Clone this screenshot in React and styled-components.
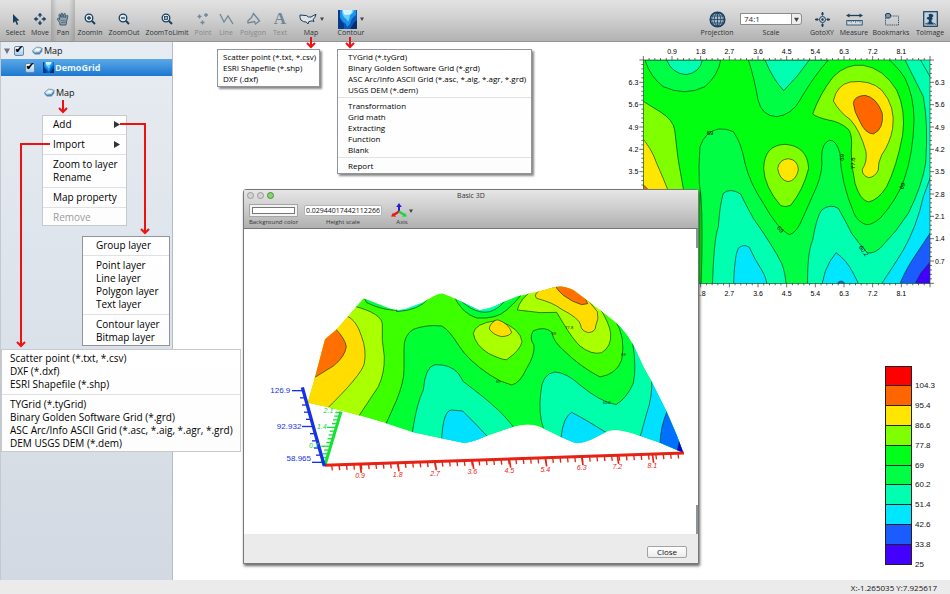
import React, { useState } from 'react';
import styled, { createGlobalStyle, css } from 'styled-components';

const GlobalStyle = createGlobalStyle`
  *, *::before, *::after {
    box-sizing: border-box;
  }
  body {
    margin: 0;
    background: #fff;
    color: #111;
    font-family: 'Open Sans', 'Noto Sans', sans-serif;
    font-size: 10px;
  }
  button, input, select {
    font-family: inherit;
    color: inherit;
  }
`;

const Page = styled.div`
  position: relative;
  display: flex;
  flex-direction: column;
  min-height: 100vh;
  overflow: hidden;
`;

const Toolbar = styled.header`
  display: flex;
  align-items: stretch;
  height: 42px;
  padding: 0 3px 0 2px;
  background: linear-gradient(#e2e2e2, #d0d0d0 45%, #b2b2b2);
  border-bottom: 1px solid #979797;
`;

const ToolGroup = styled.div`
  display: flex;
  margin-left: ${(p) => (p.$end ? 'auto' : '0')};
`;

const toolBox = css`
  display: flex;
  flex-direction: column;
  align-items: center;
  justify-content: flex-end;
  width: ${(p) => p.$w}px;
  padding: 0 0 3px;
  font-size: 7px;
  line-height: 10px;
  white-space: nowrap;
`;

const ToolButton = styled.button`
  ${toolBox}
  border: 0;
  background: ${(p) =>
    p.$pressed ? 'linear-gradient(90deg, #8f8f8f66, #ffffff22 25%, #ffffff22 75%, #8f8f8f66), linear-gradient(#d8d8d8, #a6a6a6)' : 'transparent'};
  color: #2c3236;

  &:disabled {
    color: #85898c;
  }
`;

const ToolField = styled.div`
  ${toolBox}
  color: #2c3236;
`;

const ToolIcon = styled.span`
  display: flex;
  align-items: center;
  justify-content: center;
  gap: 3px;
  height: 18px;
  color: ${(p) => (p.$off ? '#6f8797' : '#173f5f')};
`;

const ScaleBox = styled.div`
  display: flex;
  align-items: center;
  position: relative;
  width: 62px;
  height: 18px;
`;

const ScaleSelect = styled.select`
  appearance: none;
  width: 100%;
  height: 12px;
  padding: 0 0 0 3px;
  border: 1px solid #8c8c8c;
  border-radius: 0 3px 3px 0;
  background: linear-gradient(90deg, #fff 50px, #8c8c8c 50px, #8c8c8c 51px, #eee 51px);
  font-size: 8px;
  line-height: 10px;
`;

const ScaleArrow = styled.span`
  position: absolute;
  right: 3px;
  display: flex;
  pointer-events: none;
`;

const Body = styled.div`
  display: flex;
  flex: 1;
`;

const Sidebar = styled.aside`
  flex: 0 0 173px;
  border-left: 1px solid #c4c9cf;
  border-right: 1px solid #b5bcc4;
  background: linear-gradient(#e7ecf2, #d2d9e2);
  font-size: 9px;
`;

const TreeRow = styled.div`
  display: flex;
  align-items: center;
  gap: ${(p) => (p.$selected ? '8px' : '4px')};
  height: 17px;
  padding-left: ${(p) => (p.$selected ? '24px' : '3px')};
  color: ${(p) => (p.$selected ? '#e8f6ff' : '#111')};
  font-weight: ${(p) => (p.$selected ? 700 : 400)};
  ${(p) => p.$selected && 'background: linear-gradient(#5ba8e8, #1c78cf);'}
`;

const Check = styled.input`
  appearance: none;
  display: flex;
  align-items: center;
  justify-content: center;
  width: 10px;
  height: 10px;
  margin: 0;
  border: 1px solid #6487ab;
  border-radius: 2px;
  background: linear-gradient(#eef6ff, #a9ccee);

  &:checked::after {
    content: '✔';
    margin-bottom: 3px;
    color: #000;
    font: 11px 'DejaVu Sans', sans-serif;
  }
`;

const RowLabel = styled.label`
  display: flex;
  align-items: center;
  gap: 1px;
  padding-left: ${(p) => (p.$indent ? 4 : 0)}px;
`;

const MapCaption = styled.div`
  display: flex;
  align-items: center;
  gap: 1px;
  height: 17px;
  margin-top: 8px;
  padding-left: 43px;
`;

const Canvas = styled.main`
  display: flex;
  flex: 1;
  flex-direction: column;
  align-items: flex-end;
  background: #fff;
`;

const PlotSvg = styled.svg`
  width: 330px;
  height: 263px;
  font-family: 'Liberation Sans', sans-serif;
  font-size: 21px;
`;

const Legend = styled.ul`
  display: flex;
  flex-direction: column;
  width: 65px;
  height: 199px;
  margin: 61px 0 15px;
  padding: 0;
  list-style: none;
  font: 8px/10px 'Liberation Sans', sans-serif;
`;

const LegendRow = styled.li`
  display: flex;
  flex: 1;
  align-items: flex-end;
  gap: 3px;

  &::before {
    content: '';
    align-self: stretch;
    width: 27px;
    border: solid #222;
    border-width: 0 1px 1px;
    background: ${(p) => p.$color};
  }
  &:first-child::before {
    border-top-width: 1px;
  }
  span {
    margin-bottom: -5px;
  }
`;

const StatusBar = styled.footer`
  display: flex;
  justify-content: flex-end;
  height: 14px;
  padding-right: 13px;
  background: #ebebeb;
  font-size: 8px;
  line-height: 15px;
`;

const Menu = styled.div`
  position: absolute;
  left: ${(p) => p.$x}px;
  top: ${(p) => p.$y}px;
  width: ${(p) => p.$w}px;
  border: 1px solid ${(p) => (p.$dark ? '#8f959b' : '#c6cacd')};
  background: linear-gradient(#fff, #fdfdfd);
  font-size: ${(p) => (p.$small ? 8 : 10)}px;
  line-height: ${(p) => (p.$small ? 11 : 13)}px;
  box-shadow: ${(p) => (p.$small ? '2px 2px 2px #0007' : 'none')};
`;

const MenuSection = styled.div`
  padding: ${(p) => (p.$small ? 2 : 3)}px 0;

  &:first-child {
    padding-top: ${(p) => (p.$small ? 1 : 2)}px;
  }
  &:last-child {
    padding-bottom: ${(p) => (p.$small ? 2 : 1)}px;
  }
  & + & {
    border-top: 1px solid #dfe1e3;
  }
`;

const MenuItem = styled.button`
  display: flex;
  align-items: center;
  justify-content: space-between;
  width: 100%;
  padding: 0 6px 0 ${(p) => p.$pad}px;
  border: 0;
  background: none;
  color: #000;
  font-size: inherit;
  line-height: inherit;
  text-align: left;
  white-space: nowrap;

  &:disabled {
    color: #9b9b9b;
  }
`;

const Arrows = styled.svg`
  position: absolute;
  left: 0;
  top: 0;
  pointer-events: none;
`;

const Dialog = styled.section`
  position: absolute;
  left: 243px;
  top: 189px;
  width: 456px;
  border: 1px solid #777;
  border-radius: 3px 3px 0 0;
  background: #ebebeb;
  box-shadow: 1px 2px 3px #0009;
`;

const DialogHead = styled.div`
  display: flex;
  flex-direction: column;
  height: 39px;
  border-bottom: 1px solid #777;
  background: linear-gradient(#e6e6e6, #cfcfcf 45%, #b0b0b0);
  color: #333;
`;

const TitleRow = styled.div`
  display: grid;
  grid-template-columns: 1fr auto 1fr;
  align-items: center;
  height: 11px;
  padding: 0 3px;
  font-size: 7px;
  line-height: 10px;
`;

const Lights = styled.div`
  display: flex;
  gap: 3px;
`;

const Light = styled.button`
  width: 7px;
  height: 7px;
  padding: 0;
  border: 1px solid ${(p) => (p.$on ? '#4f8a43' : '#999')};
  border-radius: 50%;
  background: ${(p) => (p.$on ? '#83d86c' : '#d4d4d4')};
`;

const DialogTools = styled.div`
  display: flex;
  gap: 6px;
  padding: 2px 5px 0;
  font-size: 6px;
  line-height: 8px;
`;

const DialogTool = styled.div`
  display: flex;
  flex-direction: column;
  align-items: center;
  width: ${(p) => p.$w}px;
  white-space: nowrap;
`;

const ControlSlot = styled.div`
  display: flex;
  align-items: center;
  justify-content: center;
  gap: 2px;
  width: 100%;
  height: 15px;
`;

const Swatch = styled.input`
  width: 100%;
  height: 13px;
  padding: 2px;
  border: 1px solid #a5a5a5;
  background: #f3f3f3;

  &::-webkit-color-swatch-wrapper {
    padding: 0;
  }
  &::-webkit-color-swatch {
    border: 1px solid #777;
    border-radius: 0;
  }
`;

const HeightInput = styled.input`
  width: 100%;
  height: 11px;
  padding: 0 1px;
  border: 1px solid #b5b5b5;
  border-radius: 2px;
  background: #fff;
  color: #111;
  font-size: 7px;
`;

const PlainButton = styled.button`
  display: flex;
  align-items: center;
  gap: 2px;
  padding: 0;
  border: 0;
  background: none;
`;

const SurfaceSvg = styled.svg`
  display: block;
  width: 100%;
  height: 305px;
  background:
    linear-gradient(#8d939a, #8d939a) right top / 2px 19px no-repeat,
    linear-gradient(#8d939a, #8d939a) right bottom / 2px 29px no-repeat,
    #fff;
  font-family: 'Liberation Sans', sans-serif;
  font-size: 21px;
`;

const DialogFoot = styled.div`
  display: flex;
  align-items: center;
  justify-content: flex-end;
  height: 29px;
  padding: 6px 11px 0 0;
`;

const CloseButton = styled.button`
  width: 40px;
  height: 12px;
  padding: 0;
  border: 1px solid #a3a3a3;
  border-radius: 2px;
  background: linear-gradient(#fff, #ececec);
  font-size: 8px;
  line-height: 10px;
`;

/* ---------- icons ---------- */

const Icon = ({ w = 14, h = 14, children }) => (
  <svg width={w} height={h} viewBox={`0 0 ${w} ${h}`} fill="none" stroke="currentColor" strokeWidth="1.3">
    {children}
  </svg>
);

const DownTri = ({ size = 4 }) => (
  <svg width={size} height={size} viewBox="0 0 4 4">
    <path d="M0 0.5H4L2 4Z" fill="#444" />
  </svg>
);

const SelectIcon = () => (
  <Icon w={8} h={13}>
    <path d="M1 1V10L3.2 8.2L4.8 12L6.2 11.3L4.7 7.8L7.4 7.4Z" fill="currentColor" stroke="none" />
  </Icon>
);

const MoveIcon = () => (
  <Icon>
    <path d="M7 3V5.2M7 8.8V11M3 7H5.2M8.8 7H11" />
    <path d="M7 .8L9.4 3.6H4.6ZM7 13.2L9.4 10.4H4.6ZM.8 7L3.6 4.6V9.4ZM13.2 7L10.4 4.6V9.4Z" fill="currentColor" stroke="none" />
  </Icon>
);

const PanIcon = () => (
  <Icon>
    <path
      d="M4 13L3.6 10.5L1.3 7.3C1 6.4 2.2 6 2.8 6.8L3.7 7.7L2.9 3C3 2 4.2 2 4.4 3L5 5.6L5.1 1.7C5.3.8 6.6.8 6.7 1.7L7 5.4L8 1.9C8.4 1.1 9.5 1.4 9.4 2.3L9 5.8L10.6 3.6C11.3 3 12.2 3.6 11.8 4.5L10.8 8.5L10 13Z"
      fill="#8fa3ae"
      stroke="#35536a"
      strokeWidth=".9"
    />
    <path d="M4.6 8.5L9.6 8.8M5 10.5H9.4" stroke="#35536a" strokeWidth=".6" />
  </Icon>
);

const ZoomIcon = ({ kind }) => (
  <Icon w={12} h={12}>
    <circle cx="5" cy="5" r="3.8" fill="#e5e8ea" />
    <path d="M8 8L11 11" strokeWidth="2" />
    {kind === 'in' && <path d="M5 3V7M3 5H7" />}
    {kind === 'out' && <path d="M3 5H7" />}
    {kind === 'limit' && <rect x="3.5" y="3.5" width="3" height="3" strokeWidth=".8" fill="#a5b5c1" />}
  </Icon>
);

const PointIcon = () => (
  <Icon>
    <path d="M3.5 2.5V6.5M1.5 4.5H5.5M10 1V5M8 3H12M6.5 8.5V12.5M4.5 10.5H8.5" />
  </Icon>
);

const LineIcon = () => (
  <Icon w={15}>
    <path d="M1 2L5 10L9 4L14 12" />
  </Icon>
);

const PolygonIcon = () => (
  <Icon w={15}>
    <path d="M7.5 1.5L13.5 9L9.5 12L8.5 9.5L2 11L1.8 9L5.5 5.5Z" />
  </Icon>
);

const LetterIcon = styled.span`
  font: 700 17px/18px 'Liberation Serif', serif;
`;

const UsaIcon = () => (
  <Icon w={18} h={13}>
    <path
      d="M1 2L7.5 2.6L9.5 4L12 4L14 2.8L17 1.2L16 4.2L14.3 6.2L14.8 8.8L13.2 7.8L9.8 8.6L9 11L7.2 9L4.5 8.6L1.8 7L1 4.5Z"
      fill="#dfe3e6"
      strokeWidth="1"
    />
  </Icon>
);

const ContourIcon = ({ size = 19 }) => (
  <svg width={size} height={size} viewBox="0 0 19 19">
    <rect width="19" height="19" fill="#0b57b8" />
    <path d="M0 0H2V8Q3 12 6 14V19H0Z" fill="#083a86" />
    <path d="M19 10Q16 12 14 16L12 19H19Z" fill="#062c6c" />
    <path d="M2 0V7Q4 12 8 14L9 17L12 14Q13 8 18 5V0Z" fill="#1b94ec" />
    <path d="M4 0Q4 6 7 8Q9 9 10 12Q12 8 12 5Q15 4 16 0Z" fill="#6fd0fb" />
    <path d="M5 0Q5 5 8 5Q10 4 11 5Q14 4 14 0Z" fill="#d2f6ff" />
  </svg>
);

const GlobeIcon = () => (
  <Icon w={17} h={17}>
    <circle cx="8.5" cy="8.5" r="7.4" fill="#a9bac5" />
    <path
      d="M1 8.5H16M2 5H15M2 12H15M4 2.7H13M4 14.3H13M8.5 1V16M8.5 1Q1.5 8.5 8.5 16M8.5 1Q15.5 8.5 8.5 16M6 1.5Q-1 8.5 6 15.5M11 1.5Q18 8.5 11 15.5"
      strokeWidth=".8"
    />
  </Icon>
);

const GotoIcon = () => (
  <Icon w={17} h={17}>
    <circle cx="8.5" cy="8.5" r="3" strokeWidth="1" />
    <circle cx="8.5" cy="8.5" r="1.2" fill="currentColor" stroke="none" />
    <path d="M8.5 1V3M8.5 14V16M1 8.5H3M14 8.5H16" />
    <path d="M8.5 5L6.8 2.6H10.2ZM8.5 12L6.8 14.4H10.2ZM5 8.5L2.6 6.8V10.2ZM12 8.5L14.4 6.8V10.2Z" fill="currentColor" stroke="none" />
  </Icon>
);

const MeasureIcon = () => (
  <Icon w={17} h={13}>
    <path d="M2 2.5H15" />
    <path d="M0 2.5L3.5.5V4.5ZM17 2.5L13.5.5V4.5Z" fill="currentColor" stroke="none" />
    <rect x=".8" y="7.5" width="15.4" height="4.5" fill="#d3dce2" strokeWidth=".8" />
    <path d="M3 7.5V9M5.2 7.5V9.8M7.4 7.5V9M9.6 7.5V9.8M11.8 7.5V9M14 7.5V9.8" strokeWidth=".6" />
  </Icon>
);

const BookmarkIcon = () => (
  <Icon w={17} h={14}>
    <path d="M8 4H15.5V13H2.5V6" strokeWidth=".8" strokeDasharray="1.4 .8" />
    <rect x="2.5" y="1.5" width="5" height="4.5" rx="1.5" fill="#8196a5" strokeWidth="1" />
  </Icon>
);

const ImageIcon = () => (
  <Icon w={15} h={16}>
    <rect x=".7" y=".7" width="13.6" height="14.6" fill="#c3d0d9" strokeWidth="1.2" />
    <path d="M5.5 3.5Q7.5 2 9.5 3.2L10.5 5L9 6.5L9.8 8L8.5 9L8.8 11.5L11.5 13.5H3L5.5 12L6 9.5L5 8L3.5 8.2L4.5 6L6.2 5.8Z" fill="currentColor" stroke="none" />
    <path d="M2 13Q8 10 13 13.5" strokeWidth=".8" />
  </Icon>
);

const MapGlyph = () => (
  <svg width="11" height="10" viewBox="0 0 11 10">
    <path d="M.5 4.5L4.5 1.2Q8 .8 10.3 2.5L7.5 6.5L2.5 7Z" fill="#c6dbe8" stroke="#58809b" strokeWidth=".7" />
    <path d="M.5 4.5L2.5 7L7.5 6.5L10.3 2.5V5.3L7.5 8.6H3L.7 6.5Z" fill="#4a86b4" />
    <path d="M2 4.3L5 2.2L8.5 3L6.5 5Z" fill="#f4fafc" />
  </svg>
);

const AxisIcon = () => (
  <svg width="16" height="15" viewBox="0 0 16 15">
    <path d="M8 9V3" stroke="#2b19d8" strokeWidth="2" />
    <path d="M8 0L10.8 4H5.2Z" fill="#2b19d8" />
    <path d="M8 8.5L3 11.7" stroke="#f01515" strokeWidth="2.4" />
    <path d="M0 13.5L2 9.8L5 13.8Z" fill="#f01515" />
    <path d="M8 8.5L13 11.7" stroke="#1ad83a" strokeWidth="2.4" />
    <path d="M16 13.5L14 9.8L11 13.8Z" fill="#1ad83a" />
  </svg>
);

/* ---------- data ---------- */

const leftTools = [
  { label: 'Select', w: 27, icon: <SelectIcon /> },
  { label: 'Move', w: 22, icon: <MoveIcon /> },
  { label: 'Pan', w: 24, icon: <PanIcon />, pressed: true },
  { label: 'ZoomIn', w: 30, icon: <ZoomIcon kind="in" /> },
  { label: 'ZoomOut', w: 38, icon: <ZoomIcon kind="out" /> },
  { label: 'ZoomToLimit', w: 48, icon: <ZoomIcon kind="limit" /> },
  { label: 'Point', w: 24, icon: <PointIcon />, off: true },
  { label: 'Line', w: 22, icon: <LineIcon />, off: true },
  { label: 'Polygon', w: 32, icon: <PolygonIcon />, off: true },
  { label: 'Text', w: 22, icon: <LetterIcon>A</LetterIcon>, off: true },
  { label: 'Map', w: 40, icon: <UsaIcon />, drop: true },
  { label: 'Contour', w: 40, icon: <ContourIcon />, drop: true },
];

const rightTools = [
  { label: 'GotoXY', w: 34, icon: <GotoIcon /> },
  { label: 'Measure', w: 30, icon: <MeasureIcon /> },
  { label: 'Bookmarks', w: 44, icon: <BookmarkIcon /> },
  { label: 'ToImage', w: 34, icon: <ImageIcon /> },
];

const menus = [
  {
    name: 'Map import', x: 217, y: 49, w: 103, pad: 5, small: true, dark: true,
    sections: [['Scatter point (*.txt, *.csv)', 'ESRI Shapefile (*.shp)', 'DXF (.dxf)']],
  },
  {
    name: 'Contour', x: 337, y: 49, w: 195, pad: 10, small: true, dark: true,
    sections: [
      ['TYGrid (*.tyGrd)', 'Binary Golden Software Grid (*.grd)', 'ASC Arc/Info ASCII Grid (*.asc, *.aig, *.agr, *.grd)', 'USGS DEM (*.dem)'],
      ['Transformation', 'Grid math', 'Extracting', 'Function', 'Blank'],
      ['Report'],
    ],
  },
  {
    name: 'Map layer', x: 42, y: 115, w: 85, pad: 10,
    sections: [['Add'], ['Import'], ['Zoom to layer', 'Rename'], ['Map property'], ['Remove']],
  },
  {
    name: 'Add', x: 82, y: 236, w: 88, pad: 13, dark: true,
    sections: [['Group layer'], ['Point layer', 'Line layer', 'Polygon layer', 'Text layer'], ['Contour layer', 'Bitmap layer']],
  },
  {
    name: 'Import', x: 1, y: 349, w: 240, pad: 8,
    sections: [
      ['Scatter point (*.txt, *.csv)', 'DXF (*.dxf)', 'ESRI Shapefile (*.shp)'],
      ['TYGrid (*.tyGrid)', 'Binary Golden Software Grid (*.grd)', 'ASC Arc/Info ASCII Grid (*.asc, *.aig, *.agr, *.grd)', 'DEM USGS DEM (*.dem)'],
    ],
  },
];

const legend = [
  ['#ff0000', '104.3'],
  ['#ff6600', '95.4'],
  ['#ffe600', '86.6'],
  ['#80ff00', '77.8'],
  ['#00ff1a', '69'],
  ['#00ff44', '60.2'],
  ['#00ffb0', '51.4'],
  ['#00e6ff', '42.6'],
  ['#1a5cff', '33.8'],
  ['#4400ff', '25'],
];

const plotAreas = [
  ['#00ff44', 'M45 60Q60 110 100 140Q165 170 225 140Q265 105 272 60Z'],
  ['#00ffb0', 'M110 60Q125 100 168 104Q210 98 217 60Z'],
  ['#00ff44', 'M355 60Q372 110 384 180Q395 228 440 230Q485 225 510 180Q550 110 595 60Z'],
  ['#00ffb0', 'M405 60Q430 120 461 152Q500 115 538 60Z'],
  ['#80ff00', 'M30 178L90 215Q130 240 134 270Q142 360 160 446V760H30Z'],
  ['#ffe600', 'M30 286Q65 325 80 370Q100 415 112 446V760H30Z'],
  ['#ff6600', 'M30 425L52 446V760H30Z'],
  ['#00ff44', 'M765 50Q800 75 825 115Q852 170 852 240Q850 340 822 420Q800 480 750 535Q725 555 710 554Q685 548 672 520Q632 425 630 340Q618 298 598 301Q575 310 575 350Q580 390 560 440L520 530Q500 580 478 584Q445 570 400 490Q360 430 345 370Q335 310 310 275Q290 265 265 267Q225 275 210 320Q205 380 208 430Q222 520 212 760H920V50Z'],
  ['#00ffb0', 'M247 760Q250 600 265 560Q270 490 280 460Q300 442 332 462Q345 490 370 535Q430 620 455 670Q468 700 470 760Z'],
  ['#00e6ff', 'M310 760Q312 650 325 625Q340 610 358 622Q375 660 395 690Q412 715 414 760Z'],
  ['#00ffb0', 'M533 760Q530 640 548 600Q560 530 575 510Q600 490 625 505Q645 540 665 580Q690 615 712 638Q730 642 750 625Q800 575 835 520Q875 440 887 370Q895 250 880 170Q850 110 820 50H920V760Z'],
  ['#00ffb8', 'M866 50L920 145V50Z'],
  ['#00e6ff', 'M575 760Q575 690 618 638Q650 660 670 700L700 760Z'],
  ['#1a5cff', 'M620 732Q635 714 645 732Z'],
  ['#00e6ff', 'M735 760Q790 680 820 630Q860 560 880 470L920 360V760Z'],
  ['#1a5cff', 'M798 760Q820 700 850 655L920 550V760Z'],
  ['#4400ff', 'M840 760L872 700L920 643V760Z'],
  ['#80ff00', 'M548 222Q570 160 610 110Q650 70 700 76Q760 85 800 150Q828 210 818 285Q800 380 770 440Q745 480 715 486Q690 480 675 430Q660 350 665 310Q665 280 655 268Q630 245 595 240Q560 232 548 222Z'],
  ['#ffe600', 'M610 183Q620 135 660 126Q720 118 755 150Q798 200 788 265Q780 310 755 345Q743 370 745 390Q735 412 715 413Q695 405 697 388Q712 365 708 335Q690 270 660 238Q630 218 610 183Z'],
  ['#ff6600', 'M670 190Q672 168 705 166Q740 172 757 220Q762 268 730 282Q705 280 690 245Q672 215 670 190Z'],
  ['#80ff00', 'M401 385Q403 315 465 313Q532 318 536 385Q520 450 482 496Q466 503 452 497Q403 440 401 385Z'],
  ['#ffe600', 'M443 385Q448 358 475 356Q505 360 505 390Q498 422 474 425Q448 420 443 385Z'],
];

const surfaceOutline =
  'M173 398L195 322L225 208L258 180L295 138L340 85L400 108Q445 130 480 112L520 97Q560 70 577 70Q600 78 630 93L685 119Q705 124 760 97L805 78L860 66L915 51Q940 45 970 60L1010 90L1070 135Q1120 170 1150 225L1180 290L1205 335L1250 425L1280 495L1300 548L1230 518L1170 497Q1110 475 1075 482L1025 508Q990 524 970 517L935 502L880 475Q845 455 790 470L710 497Q660 520 640 518L575 505L490 487L408 460L325 436L235 412Z';

const surfaceAreas = [
  ['#00ff44', 'M345 88L350 98Q400 122 445 121L445 60H345Z'],
  ['#00ffb0', 'M440 125Q510 120 535 85L480 80L350 80Q400 105 440 116Z'],
  ['#00ff33', 'M610 75Q635 130 680 144Q740 148 770 120Q800 95 825 60Z'],
  ['#00ffaa', 'M630 90Q695 150 745 112L785 75Z'],
  ['#aaff00', 'M310 108Q398 130 397 165Q394 210 403 260Q404 310 385 350L315 455H100V108Z'],
  ['#ffdd00', 'M288 136Q320 150 335 200Q350 240 343 280Q335 315 225 422H100V136Z'],
  ['#ff7000', 'M256 176Q285 205 289 230Q285 260 250 288L190 325H100V176Z'],
  ['#00ff33', 'M402 475L440 390Q462 335 462 300V240Q460 195 490 178Q530 163 575 168Q598 180 625 225Q655 272 720 315Q750 336 785 345Q810 340 830 295Q855 255 852 225Q836 205 850 182Q885 168 905 186Q910 215 940 240Q990 290 1050 321Q1100 312 1115 270Q1128 200 1095 150L1060 120H1400V600H402Z'],
  ['#00ffaa', 'M487 600V487Q500 400 520 360Q525 290 555 284Q600 282 625 310L640 335Q700 380 720 398Q770 440 800 485V600Z'],
  ['#00e1ff', 'M575 600V505Q580 420 605 420L638 423L680 465L722 510V600Z'],
  ['#00ffaa', 'M880 600V475Q865 430 872 370Q875 310 915 306Q950 308 990 345Q1050 395 1098 404Q1130 385 1150 340Q1160 290 1148 220H1400V600Z'],
  ['#00e1ff', 'M933 600V502Q940 440 965 427Q1010 450 1080 495V600Z'],
  ['#00e1ff', 'M1205 325Q1208 380 1190 430L1165 520V600H1400V325Z'],
  ['#0070ff', 'M1255 415Q1230 470 1230 525V600H1400V415Z'],
  ['#1000d8', 'M1290 505L1278 560V600H1400V505Z'],
  ['#aaff00', 'M850 60Q810 85 802 120Q840 124 870 128L920 127L940 160Q970 210 990 228Q1025 256 1055 248Q1085 230 1082 190Q1078 160 1050 115L1000 40Z'],
  ['#ffdd00', 'M885 50Q845 72 860 85Q910 98 935 118Q988 145 992 165Q992 182 1015 188Q1038 185 1037 168Q1048 145 1042 125L990 60L930 30Z'],
  ['#ff7000', 'M912 40Q920 60 940 76Q970 98 995 104L1013 101Q1005 75 970 45Z'],
  ['#aaff00', 'M738 152Q675 160 670 190Q675 225 715 250Q755 270 770 269Q812 240 816 215Q812 175 745 152Z'],
  ['#ffdd00', 'M738 150Q718 162 718 177Q730 195 755 200Q780 198 785 187Q775 160 745 150Z'],
];

const range = (n) => Array.from({ length: n }, (_, i) => i);

const ContourPlot = () => (
  <PlotSvg viewBox="-30 6 990 789" role="img" aria-label="Contour map">
    <defs>
      <clipPath id="plotClip">
        <rect x="40" y="60" width="860" height="670" />
      </clipPath>
    </defs>
    <rect x="40" y="60" width="860" height="670" fill="#00ff11" />
    <g clipPath="url(#plotClip)" stroke="#0a3a14" strokeWidth="2">
      {plotAreas.map(([fill, d]) => (
        <path key={d} d={d} fill={fill} />
      ))}
    </g>
    <rect x="40" y="60" width="860" height="670" fill="none" stroke="#1c5524" strokeWidth="2" />
    <g stroke="#222" strokeWidth="2">
      {range(51).map((i) => {
        const x = 40 + i * 17.2;
        const len = i % 5 === 0 ? 12 : 6;
        return <path key={i} d={`M${x} 60V${60 - len}M${x} 730V${730 + len}`} />;
      })}
      {range(51).map((i) => {
        const y = 730 - i * 13.4;
        const len = i % 5 === 0 ? 12 : 6;
        return <path key={i} d={`M40 ${y}H${40 - len}M900 ${y}H${900 + len}`} />;
      })}
    </g>
    {range(9).map((i) => (
      <g key={i} textAnchor="middle">
        <text x={126 + i * 86} y="43">{((i + 1) * 0.9).toFixed(1)}</text>
        <text x={126 + i * 86} y="768">{((i + 1) * 0.9).toFixed(1)}</text>
      </g>
    ))}
    {range(9).map((i) => (
      <g key={i}>
        <text x="25" y={671 - i * 67} textAnchor="end">{((i + 1) * 0.7).toFixed(1)}</text>
        <text x="915" y={671 - i * 67}>{((i + 1) * 0.7).toFixed(1)}</text>
      </g>
    ))}
    <g fontSize="18" textAnchor="middle">
      <text x="240" y="286">69</text>
      <text transform="translate(642 352) rotate(-90)">69</text>
      <text transform="translate(676 370) rotate(-90)">77.8</text>
      <text transform="translate(823 440) rotate(-65)">69</text>
      <text transform="translate(446 572) rotate(50)">69</text>
      <text transform="translate(696 636) rotate(55)">60.2</text>
    </g>
  </PlotSvg>
);

const redTicks = [330, 443, 555, 667, 778, 886, 995, 1102, 1207];

const Surface = () => (
  <SurfaceSvg viewBox="-18 -123 1362 915" role="img" aria-label="Basic 3D surface">
    <defs>
      <clipPath id="surfaceClip">
        <path d={surfaceOutline} />
      </clipPath>
    </defs>
    <path d="M225 585L273 425" stroke="#10e430" strokeWidth="9" />
    {range(14).map((i) => (
      <path
        key={i}
        d={`M${228 + i * 3.4} ${574 - i * 11.3}h${i % 5 === 4 ? -28 : -16}`}
        stroke="#10e430"
        strokeWidth="4"
      />
    ))}
    <g clipPath="url(#surfaceClip)">
      <path d={surfaceOutline} fill="#3cff00" />
      <g stroke="#103a10" strokeWidth="2">
        {surfaceAreas.map(([fill, d]) => (
          <path key={d} d={d} fill={fill} />
        ))}
      </g>
    </g>
    <g fill="#111" fontSize="12">
      <text x="738" y="338">69</text>
      <text x="1058" y="402">60.2</text>
      <text x="905" y="194">69</text>
      <text x="946" y="178">77.8</text>
      <text x="1114" y="258">69</text>
    </g>
    <path d="M223 586L1302 549" stroke="#e52213" strokeWidth="9" />
    {range(48).map((i) => {
      const x = 245 + i * 22.1;
      return <path key={i} d={`M${x} ${586 - (x - 223) * 0.0343}l2 16`} stroke="#e52213" strokeWidth="4" />;
    })}
    {redTicks.map((x, i) => (
      <g key={x}>
        <path d={`M${x} ${586 - (x - 223) * 0.0343}l4 26`} stroke="#e52213" strokeWidth="5" />
        <text x={x} y={625 - i * 4} fill="#e52213" fontStyle="italic" textAnchor="middle">
          {((i + 1) * 0.9).toFixed(1)}
        </text>
      </g>
    ))}
    <path d="M157 352L223 588" stroke="#1632e6" strokeWidth="10" />
    {range(11).map((i) => (
      <path
        key={i}
        d={`M${160 + i * 6} ${362 + i * 21.5}h${i % 5 === 0 ? -34 : -16}`}
        stroke="#1632e6"
        strokeWidth="4"
      />
    ))}
    <g fill="#1632e6" textAnchor="end" fontSize="24">
      <text x="121" y="370">126.9</text>
      <text x="154" y="477">92.932</text>
      <text x="183" y="573">58.965</text>
    </g>
    <g fill="#10d42c" textAnchor="end" fontStyle="italic">
      <text x="250" y="429">2.1</text>
      <text x="230" y="478">1.4</text>
      <text x="206" y="535">0.7</text>
    </g>
  </SurfaceSvg>
);

const Tool = ({ tool }) => (
  <ToolButton type="button" $w={tool.w} $pressed={tool.pressed} disabled={tool.off}>
    <ToolIcon $off={tool.off}>
      {tool.icon}
      {tool.drop && <DownTri />}
    </ToolIcon>
    <span>{tool.label}</span>
  </ToolButton>
);

const PopupMenu = ({ menu }) => (
  <Menu $x={menu.x} $y={menu.y} $w={menu.w} $small={menu.small} $dark={menu.dark} aria-label={menu.name}>
    {menu.sections.map((items) => (
      <MenuSection key={items[0]} $small={menu.small}>
        {items.map((item) => (
          <MenuItem key={item} type="button" $pad={menu.pad} disabled={item === 'Remove'}>
            {item}
            {(item === 'Add' || item === 'Import') && (
              <svg width="6" height="7" viewBox="0 0 6 7">
                <path d="M0 0L6 3.5L0 7Z" fill="#333" />
              </svg>
            )}
          </MenuItem>
        ))}
      </MenuSection>
    ))}
  </Menu>
);

const App = () => {
  const [checked, setChecked] = useState({ map: true, grid: true });
  const [height, setHeight] = useState('0.02944017442112266');
  const [background, setBackground] = useState('#ffffff');

  const toggle = (e) => {
    const { name, checked: value } = e.target;
    setChecked((prev) => ({ ...prev, [name]: value }));
  };

  return (
    <Page>
      <GlobalStyle />
      <Toolbar>
        <ToolGroup>
          {leftTools.map((tool) => (
            <Tool key={tool.label} tool={tool} />
          ))}
        </ToolGroup>
        <ToolGroup $end>
          <Tool tool={{ label: 'Projection', w: 40, icon: <GlobeIcon /> }} />
          <ToolField $w={68}>
            <ScaleBox>
              <ScaleSelect id="scale">
                <option>74:1</option>
              </ScaleSelect>
              <ScaleArrow>
                <DownTri size={5} />
              </ScaleArrow>
            </ScaleBox>
            <label htmlFor="scale">Scale</label>
          </ToolField>
          {rightTools.map((tool) => (
            <Tool key={tool.label} tool={tool} />
          ))}
        </ToolGroup>
      </Toolbar>

      <Body>
        <Sidebar>
          <TreeRow>
            <svg width="6" height="6" viewBox="0 0 6 6">
              <path d="M0 .5H6L3 6Z" fill="#6c7680" />
            </svg>
            <Check type="checkbox" id="map" name="map" checked={checked.map} onChange={toggle} />
            <RowLabel htmlFor="map" $indent>
              <MapGlyph />
              Map
            </RowLabel>
          </TreeRow>
          <TreeRow $selected>
            <Check type="checkbox" id="grid" name="grid" checked={checked.grid} onChange={toggle} />
            <RowLabel htmlFor="grid">
              <ContourIcon size={11} />
              DemoGrid
            </RowLabel>
          </TreeRow>
          <MapCaption>
            <MapGlyph />
            Map
          </MapCaption>
        </Sidebar>
        <Canvas>
          <ContourPlot />
          <Legend>
            {legend.map(([color, label]) => (
              <LegendRow key={label} $color={color}>
                <span>{label}</span>
              </LegendRow>
            ))}
          </Legend>
        </Canvas>
      </Body>
      <StatusBar>X:-1.265035 Y:7.925617</StatusBar>

      {menus.map((menu) => (
        <PopupMenu key={menu.name} menu={menu} />
      ))}

      <Dialog aria-label="Basic 3D">
        <DialogHead>
          <TitleRow>
            <Lights>
              <Light type="button" aria-label="Close window" />
              <Light type="button" aria-label="Minimize" />
              <Light type="button" aria-label="Zoom" $on />
            </Lights>
            <span>Basic 3D</span>
          </TitleRow>
          <DialogTools>
            <DialogTool $w={49}>
              <ControlSlot>
                <Swatch type="color" id="bg" value={background} onChange={(e) => setBackground(e.target.value)} />
              </ControlSlot>
              <label htmlFor="bg">Background color</label>
            </DialogTool>
            <DialogTool $w={78}>
              <ControlSlot>
                <HeightInput id="height" value={height} onChange={(e) => setHeight(e.target.value)} />
              </ControlSlot>
              <label htmlFor="height">Height scale</label>
            </DialogTool>
            <DialogTool $w={28}>
              <ControlSlot>
                <PlainButton type="button" aria-labelledby="axis">
                  <AxisIcon />
                  <DownTri />
                </PlainButton>
              </ControlSlot>
              <span id="axis">Axis</span>
            </DialogTool>
          </DialogTools>
        </DialogHead>
        <Surface />
        <DialogFoot>
          <CloseButton type="button">Close</CloseButton>
        </DialogFoot>
      </Dialog>

      <Arrows width="400" height="360" fill="none" stroke="#ee1111" strokeWidth="2">
        <path d="M311 37V47M307 43L311 47L315 43" />
        <path d="M350 37V47M346 43L350 47L354 43" />
        <path d="M63 100V111M59 108L63 112L67 108" />
        <path d="M120 124H145V233M141 229L145 233L149 229" />
        <path d="M50 144H21V346M17 342L21 346L25 342" />
      </Arrows>
    </Page>
  );
};

export default App;
